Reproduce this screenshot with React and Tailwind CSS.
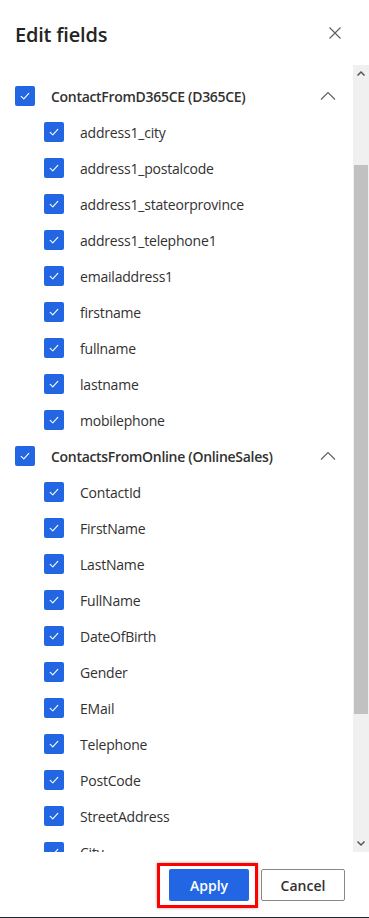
import React from "react";

const groups = [
  {
    name: "ContactFromD365CE (D365CE)",
    fields: [
      "address1_city",
      "address1_postalcode",
      "address1_stateorprovince",
      "address1_telephone1",
      "emailaddress1",
      "firstname",
      "fullname",
      "lastname",
      "mobilephone",
    ],
  },
  {
    name: "ContactsFromOnline (OnlineSales)",
    fields: [
      "ContactId",
      "FirstName",
      "LastName",
      "FullName",
      "DateOfBirth",
      "Gender",
      "EMail",
      "Telephone",
      "PostCode",
      "StreetAddress",
      "City",
      "Country",
    ],
  },
];

const Checkbox = () => (
  <span className="flex h-5 w-5 shrink-0 items-center justify-center rounded-[2px] bg-[#2266e3]">
    <svg width="12" height="12" viewBox="0 0 12 12" fill="none">
      <path d="M2.2 6.3 4.8 8.8 9.8 3.4" stroke="white" strokeWidth="1.1" strokeLinecap="round" strokeLinejoin="round" />
    </svg>
  </span>
);

const ChevronUp = () => (
  <svg width="16" height="10" viewBox="0 0 16 10" fill="none">
    <path d="M1 8.5 8 1.5l7 7" stroke="#605e5c" strokeWidth="1.1" />
  </svg>
);

const App = () => {
  return (
    <div
      className="flex h-[918px] w-[369px] flex-col border-b border-[#1b2a30] bg-white text-[#323130]"
      style={{ fontFamily: '"Open Sans", "Noto Sans", sans-serif' }}
    >
      {/* Header */}
      <div className="flex h-[65px] shrink-0 items-center justify-between pl-[15px] pr-[24px] pt-[4px]">
        <h1 className="text-[20px] font-semibold tracking-[-0.2px] text-[#242424]">Edit fields</h1>
        <button className="-mt-[4px] flex h-5 w-5 items-center justify-center">
          <svg width="12" height="12" viewBox="0 0 12 12" fill="none">
            <path d="M0.5 0.5l11 11M11.5 0.5l-11 11" stroke="#605e5c" strokeWidth="1.1" />
          </svg>
        </button>
      </div>

      {/* Field list */}
      <div className="flex min-h-0 flex-1">
        <div className="min-w-0 flex-1 overflow-hidden pt-[13px]">
          {groups.map((g) => (
            <div key={g.name}>
              <div className="flex h-9 items-center pl-[15px] pr-[17px]">
                <Checkbox />
                <span className="ml-4 flex-1 text-[14px] font-semibold tracking-[-0.3px]">{g.name}</span>
                <ChevronUp />
              </div>
              {g.fields.map((f) => (
                <div key={f} className="flex h-9 items-center pl-[44px]">
                  <Checkbox />
                  <span className="ml-4 text-[14px] tracking-[-0.2px]">{f}</span>
                </div>
              ))}
            </div>
          ))}
        </div>

        {/* Scrollbar */}
        <div className="flex w-4 shrink-0 flex-col bg-[#f0f0f0]">
          <div className="flex h-4 shrink-0 items-center justify-center">
            <svg width="8" height="6" viewBox="0 0 8 6">
              <path d="M0 5 4 1l4 4-1 1-3-3-3 3z" fill="#505050" />
            </svg>
          </div>
          <div className="h-[84px] shrink-0" />
          <div className="mx-[1px] h-[549px] shrink-0 bg-[#c1c1c1]" />
          <div className="flex-1" />
          <div className="flex h-4 shrink-0 items-center justify-center">
            <svg width="8" height="6" viewBox="0 0 8 6">
              <path d="M0 1 4 5l4-4-1-1-3 3-3-3z" fill="#505050" />
            </svg>
          </div>
        </div>
      </div>

      {/* Footer */}
      <div className="flex h-[65px] shrink-0 items-start justify-end gap-3 pr-6 pt-[17px]">
        <div className="relative">
          <button className="h-8 w-20 rounded-[2px] bg-[#2266e3] text-[14px] font-semibold text-white">
            Apply
          </button>
          <span className="pointer-events-none absolute -bottom-[7px] -left-[12px] -right-[9px] -top-[6px] border-[3px] border-[#ff0000] shadow-[0_0_3px_rgba(0,0,0,0.35)]" />
        </div>
        <button className="h-8 w-[84px] rounded-[2px] border border-[#8a8886] bg-white text-[14px] font-semibold text-[#323130]">
          Cancel
        </button>
      </div>
    </div>
  );
};

export default App;
